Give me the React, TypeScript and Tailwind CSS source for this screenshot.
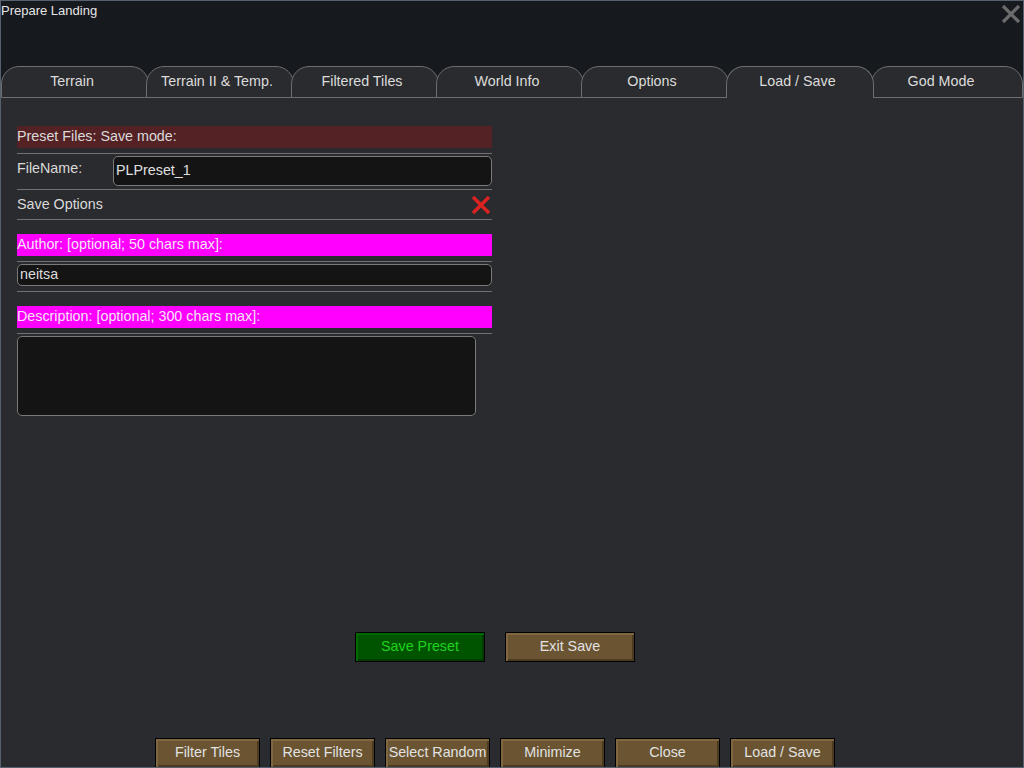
import React from 'react';

const tabs = ['Terrain', 'Terrain II & Temp.', 'Filtered Tiles', 'World Info', 'Options', 'Load / Save', 'God Mode'];
const bottomButtons = ['Filter Tiles', 'Reset Filters', 'Select Random', 'Minimize', 'Close', 'Load / Save'];

const Separator: React.FC = () => <div className="h-px w-full bg-[#707070]"></div>;

const BrownButton: React.FC<{ label: string; width: string }> = ({ label, width }) => (
    <div className={`${width} h-[30px] shrink-0 border border-black bg-[#6a5431] shadow-[inset_2px_2px_0_#80673f,inset_-2px_-2px_0_#4c3b21] flex items-center justify-center text-[14.3px] text-[#e2e2e2]`}>
        {label}
    </div>
);

const App: React.FC = () => {
    return (
        <div
            className="w-[1024px] h-[768px] overflow-hidden bg-[#16191e] border border-[#57606e] flex flex-col"
            style={{ fontFamily: '"Liberation Sans", Arial, sans-serif' }}
        >
            {/* Title */}
            <div className="h-[65px] shrink-0 flex justify-between items-start">
                <div className="text-[13px] text-[#e6e6e6] leading-none pt-[3px]">Prepare Landing</div>
                <svg width="20" height="20" viewBox="0 0 20 20" className="mt-[3px] mr-[2px]">
                    <path d="M2 2 L18 18 M18 2 L2 18" stroke="#6b6b6b" strokeWidth="3.2" />
                </svg>
            </div>

            {/* Tabs */}
            <div className="h-[32px] shrink-0 flex items-end">
                {tabs.map((t, i) => {
                    const active = t === 'Load / Save';
                    const last = i === tabs.length - 1;
                    let cls = 'h-[32px] shrink-0 rounded-t-[18px] border border-[#6e6e6e] bg-[#2a2b2e] flex items-center justify-center text-[14.3px] text-[#dcdcdc]';
                    if (i > 0) cls += ' -ml-[3px]';
                    cls += active ? ' relative z-10 border-b-0 pb-[1px] pr-[5px]' : ' pr-[6px]';
                    cls += last ? ' flex-1 pr-[12px]' : ' w-[148px]';
                    return (
                        <div key={t} className={cls}>
                            {t}
                        </div>
                    );
                })}
            </div>

            {/* Panel */}
            <div className="flex-1 bg-[#2a2b2e] flex flex-col text-[14.3px] text-[#dadada]">
                <div className="pl-[16px] pt-[28px] w-[491px] flex flex-col">
                    <div className="h-[22px] bg-[#542225] flex items-center">Preset Files: Save mode:</div>
                    <div className="mt-[5px]"><Separator /></div>

                    <div className="flex items-start h-[35px]">
                        <div className="w-[96px] pt-[4px]">FileName:</div>
                        <div className="flex-1 mt-[2px] h-[30px] bg-[#141414] border border-[#7a7a7a] rounded-[5px] flex items-center px-[2px] text-[#e0e0e0]">
                            PLPreset_1
                        </div>
                    </div>
                    <Separator />

                    <div className="flex items-start justify-between h-[29px]">
                        <div className="pt-[4px]">Save Options</div>
                        <svg width="22" height="20" viewBox="0 0 22 20" className="mt-[5px]">
                            <path d="M3 2 L19 18 M19 2 L3 18" stroke="#dd2222" strokeWidth="3.4" />
                        </svg>
                    </div>
                    <Separator />

                    <div className="mt-[14px] h-[22px] bg-[#ff00ff] text-[#f4e4f4] flex items-center">Author: [optional; 50 chars max]:</div>
                    <div className="mt-[5px]"><Separator /></div>
                    <div className="mt-[2px] h-[22px] bg-[#141414] border border-[#7a7a7a] rounded-[5px] flex items-center px-[2px] text-[#dcdcdc]">
                        neitsa
                    </div>
                    <div className="mt-[5px]"><Separator /></div>

                    <div className="mt-[14px] h-[22px] bg-[#ff00ff] text-[#f4e4f4] flex items-center">Description: [optional; 300 chars max]:</div>
                    <div className="mt-[5px]"><Separator /></div>
                    <div className="mt-[2px] w-[459px] h-[80px] bg-[#141414] border border-[#7a7a7a] rounded-[5px]"></div>
                </div>

                <div className="mt-[216px] pl-[354px] flex gap-[20px]">
                    <div className="w-[130px] h-[30px] shrink-0 border border-black bg-[#005400] shadow-[inset_2px_2px_0_#006900,inset_-2px_-2px_0_#003b00] flex items-center justify-center text-[#1fd21f]">
                        Save Preset
                    </div>
                    <BrownButton label="Exit Save" width="w-[130px]" />
                </div>

                <div className="mt-[76px] pl-[154px] flex gap-[10px]">
                    {bottomButtons.map((b) => (
                        <BrownButton key={b} label={b} width="w-[105px]" />
                    ))}
                </div>
            </div>
        </div>
    );
};

export default App;
